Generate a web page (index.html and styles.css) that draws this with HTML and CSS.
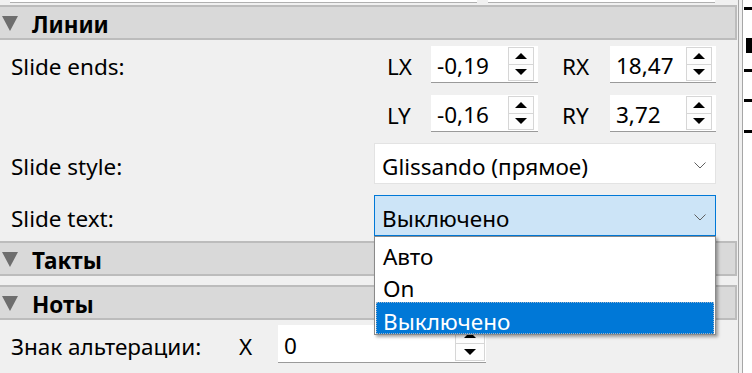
FILE: index.html
```html
<!DOCTYPE html>
<html lang="ru">
<head>
<meta charset="utf-8">
<title>Inspector</title>
<link rel="stylesheet" href="styles.css">
</head>
<body>
<div class="app">
  <div class="panel">
    <div class="remnant"><div class="rem rem1"></div><div class="rem rem2"></div></div>

    <div class="section-header"><span class="tri"></span><span class="title">Линии</span></div>

    <div class="form">
      <div class="row row-spin">
        <div class="label">Slide ends:</div>
        <div class="controls spins">
          <span class="axis">LX</span>
          <div class="spin"><span class="val">-0,19</span><div class="btns"><span class="btn"><i class="up"></i></span><span class="btn"><i class="down"></i></span></div></div>
          <span class="axis axis-r">RX</span>
          <div class="spin"><span class="val">18,47</span><div class="btns"><span class="btn"><i class="up"></i></span><span class="btn"><i class="down"></i></span></div></div>
        </div>
      </div>
      <div class="row row-spin">
        <div class="label"></div>
        <div class="controls spins">
          <span class="axis">LY</span>
          <div class="spin"><span class="val">-0,16</span><div class="btns"><span class="btn"><i class="up"></i></span><span class="btn"><i class="down"></i></span></div></div>
          <span class="axis axis-r">RY</span>
          <div class="spin"><span class="val">3,72</span><div class="btns"><span class="btn"><i class="up"></i></span><span class="btn"><i class="down"></i></span></div></div>
        </div>
      </div>
      <div class="row row-combo">
        <div class="label">Slide style:</div>
        <div class="controls">
          <div class="combo"><span class="val">Glissando (прямое)</span><svg class="chev" width="12" height="7" viewBox="0 0 12 7"><path d="M0.5 0.5 L6 6 L11.5 0.5" fill="none" stroke="#606060" stroke-width="1"/></svg></div>
        </div>
      </div>
      <div class="row row-combo row-last">
        <div class="label">Slide text:</div>
        <div class="controls combo-wrap">
          <div class="combo combo-open"><span class="val">Выключено</span><svg class="chev" width="12" height="7" viewBox="0 0 12 7"><path d="M0.5 0.5 L6 6 L11.5 0.5" fill="none" stroke="#606060" stroke-width="1"/></svg></div>
          <div class="popup">
            <div class="item">Авто</div>
            <div class="item">On</div>
            <div class="item item-sel">Выключено</div>
          </div>
        </div>
      </div>
    </div>

    <div class="section-header"><span class="tri"></span><span class="title">Такты</span></div>
    <div class="section-gap"></div>
    <div class="section-header"><span class="tri"></span><span class="title">Ноты</span></div>

    <div class="form form-notes">
      <div class="row row-acc">
        <div class="label label-acc">Знак альтерации:</div>
        <span class="axis-x">X</span>
        <div class="spin spin-wide"><span class="val">0</span><div class="btns"><span class="btn"><i class="up"></i></span><span class="btn"><i class="down"></i></span></div></div>
      </div>
    </div>
  </div>

  <div class="divider"></div>
  <div class="score">
    <span class="mark" style="top:7px"></span>
    <span class="mark mark-block" style="top:38px"></span>
    <span class="mark" style="top:69px"></span>
    <span class="mark" style="top:99px"></span>
    <span class="mark" style="top:130px"></span>
  </div>
</div>
</body>
</html>
```

FILE: styles.css
```css
* { box-sizing: border-box; }

html, body {
  margin: 0;
  padding: 0;
  background: #f0f0f0;
  overflow: hidden;
}

body {
  font-family: "Noto Sans", "Open Sans", sans-serif;
  font-size: 22.5px;
  color: #000;
  width: 752px;
  height: 373px;
}

.app {
  display: flex;
  height: 373px;
}

.panel {
  width: 737px;
  flex: none;
  display: flex;
  flex-direction: column;
}

/* remnants of the widgets above */
.remnant {
  height: 5px;
  display: flex;
}
.rem {
  height: 3px;
  background: #fff;
  border-bottom: 1px solid #b0b0b0;
}
.rem1 { margin-left: 10px; width: 467px; }
.rem2 { margin-left: 11px; width: 227px; }

/* section headers */
.section-header {
  height: 35px;
  flex: none;
  background: #d9d9d9;
  border-top: 2px solid #bcbcbc;
  border-bottom: 2px solid #bcbcbc;
  border-right: 2px solid #bcbcbc;
  display: flex;
  align-items: center;
}
.tri {
  width: 0;
  height: 0;
  margin-left: 2px;
  margin-top: 2px;
  border-left: 8px solid transparent;
  border-right: 8px solid transparent;
  border-top: 15px solid #6e6e6e;
}
.title {
  margin-left: 14px;
  padding-top: 5px;
  font-weight: 700;
  line-height: 1;
}
.section-gap { height: 9px; flex: none; }

/* form rows */
.form {
  padding: 6px 21px 5px 11px;
  display: flex;
  flex-direction: column;
  gap: 12px;
}
.row {
  display: grid;
  grid-template-columns: 1fr 342px;
  align-items: center;
}
.row-spin { height: 37px; }
.row-combo { height: 41px; margin-top: -1px; }
.row-last { margin-top: -1px; }

.label { white-space: nowrap; padding-top: 4px; }
.row-combo .label { padding-top: 6px; }

.controls { position: relative; }
.spins {
  display: flex;
  align-items: center;
  padding-left: 13px;
}
.axis { width: 44px; padding-top: 4px; }
.axis-r { width: 48px; margin-left: 24px; }

/* spin boxes */
.spin {
  position: relative;
  width: 107px;
  height: 37px;
  background: #fff;
  border-bottom: 1px solid #9a9a9a;
  display: flex;
  align-items: center;
}
.spin .val { padding-left: 6px; padding-top: 3px; }
.spins .spin + .axis + .spin { width: 106px; }
.btns {
  position: absolute;
  right: 4px;
  top: 1px;
  bottom: 1px;
  width: 26px;
  display: flex;
  flex-direction: column;
  border: 1px solid #d6d6d6;
  background: #fdfdfd;
}
.btn {
  flex: 1;
  display: flex;
  align-items: center;
  justify-content: center;
}
.btn + .btn { border-top: 1px solid #d6d6d6; }
.up {
  width: 0; height: 0;
  border-left: 6px solid transparent;
  border-right: 6px solid transparent;
  border-bottom: 6px solid #000;
}
.down {
  width: 0; height: 0;
  border-left: 6px solid transparent;
  border-right: 6px solid transparent;
  border-top: 6px solid #000;
}

/* combo boxes */
.combo {
  height: 41px;
  background: #fff;
  border: 1px solid #e3e3e3;
  display: flex;
  align-items: center;
  padding-left: 7px;
  padding-right: 9px;
}
.combo .val { flex: 1; padding-top: 5px; }
.chev { margin-top: 3px; }
.combo-open {
  background: #cce4f7;
  border-color: #0078d7;
}

/* dropdown popup */
.popup {
  position: absolute;
  z-index: 10;
  left: 0;
  top: 100%;
  width: 342px;
  background: #fff;
  border: 1px solid #8a8a8a;
  box-shadow: 2px 2px 3px rgba(0, 0, 0, 0.35);
  padding: 0 1px 0 1px;
}
.item {
  height: 32px;
  display: flex;
  align-items: center;
  padding-left: 7px;
  padding-top: 9px;
  line-height: 1;
}
.item-sel {
  margin-top: 1px;
  background: #0078d7;
  color: #fff;
  outline: 1px dotted #9fb4c8;
  outline-offset: -1px;
}

/* notes row */
.form-notes { padding-top: 5px; }
.row-acc {
  display: flex;
  align-items: center;
  height: 38px;
}
.label-acc { width: 228px; }
.axis-x { width: 39px; padding-top: 4px; }
.spin-wide { width: 208px; height: 38px; }
.spin-wide .btns { right: 1px; width: 30px; }

/* score canvas at right */
.divider {
  width: 1px;
  margin-left: 1px;
  background: #a6a6a6;
  flex: none;
}
.score {
  position: relative;
  flex: 1;
  margin-left: 3px;
  background: #fff;
  border-left: 1px solid #a6a6a6;
}
.mark {
  position: absolute;
  left: 1px;
  right: 0;
  height: 3px;
  background: #000;
}
.mark-block {
  left: 3px;
  height: 15px;
}
```
